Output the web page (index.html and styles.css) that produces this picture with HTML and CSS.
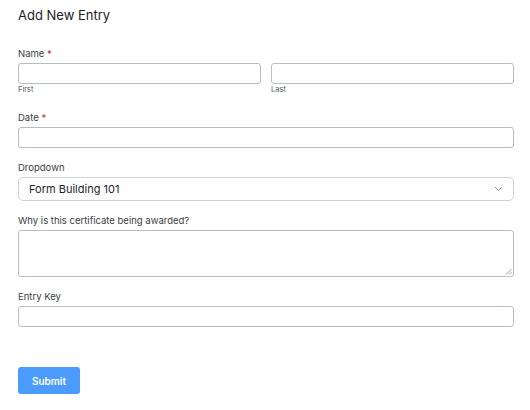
FILE: index.html
```html
<!DOCTYPE html>
<html>
<head>
<meta charset="utf-8">
<link rel="stylesheet" href="styles.css">
</head>
<body>
<div class="form">
  <h1 class="title">Add New Entry</h1>

  <div class="field field-name">
    <div class="label">Name <span class="req">*</span></div>
    <div class="name-row">
      <div class="name-col">
        <div class="input"></div>
        <div class="sublabel">First</div>
      </div>
      <div class="name-col">
        <div class="input"></div>
        <div class="sublabel">Last</div>
      </div>
    </div>
  </div>

  <div class="field">
    <div class="label">Date <span class="req">*</span></div>
    <div class="input"></div>
  </div>

  <div class="field">
    <div class="label">Dropdown</div>
    <div class="select">
      <span>Form Building 101</span>
      <svg class="chev" width="9" height="6" viewBox="0 0 9 6"><path d="M1 1l3.5 3.5L8 1" fill="none" stroke="#8a8f98" stroke-width="1"/></svg>
    </div>
  </div>

  <div class="field">
    <div class="label">Why is this certificate being awarded?</div>
    <div class="textarea">
      <svg class="grip" width="7" height="7" viewBox="0 0 7 7"><path d="M6.5 1L1 6.5M6.5 4L4 6.5" stroke="#888" stroke-width="0.8"/></svg>
    </div>
  </div>

  <div class="field">
    <div class="label">Entry Key</div>
    <div class="input"></div>
  </div>

  <button class="submit">Submit</button>
</div>
</body>
</html>
```

FILE: styles.css
```css
html, body {
  margin: 0;
  padding: 0;
  background: #fff;
}
body {
  font-family: Inter, "Liberation Sans", sans-serif;
  color: #2a2d33;
}
.form {
  padding: 7px 16px 0 18px;
  display: flex;
  flex-direction: column;
}
.title {
  margin: 0 0 25px 0;
  font-size: 13px;
  line-height: 16px;
  font-weight: 400;
  color: #1d2125;
}
.field {
  display: flex;
  flex-direction: column;
  margin-bottom: 14px;
}
.field-name {
  margin-bottom: 17px;
}
.label {
  font-size: 9.5px;
  line-height: 12px;
  margin-bottom: 3px;
  color: #3a3d42;
}
.req {
  color: #c0282d;
}
.name-row {
  display: flex;
  gap: 10px;
}
.name-col {
  flex: 1;
  display: flex;
  flex-direction: column;
}
.sublabel {
  font-size: 7.5px;
  line-height: 10px;
  margin-top: 1px;
  color: #555a60;
}
.input {
  height: 21px;
  box-sizing: border-box;
  border: 1px solid #b9bdc4;
  border-radius: 3px;
  background: #fff;
}
.select {
  height: 24px;
  box-sizing: border-box;
  border: 1px solid #ced2d8;
  border-radius: 5px;
  display: flex;
  align-items: center;
  justify-content: space-between;
  padding: 0 10px 0 10px;
  font-size: 11px;
  color: #23262b;
}
.chev {
  display: block;
}
.textarea {
  height: 47px;
  box-sizing: border-box;
  border: 1px solid #b9bdc4;
  border-radius: 3px;
  display: flex;
  justify-content: flex-end;
  align-items: flex-end;
  padding: 0 1px 1px 0;
}
.grip {
  display: block;
}
.submit {
  margin-top: 26px;
  align-self: flex-start;
  width: 62px;
  height: 27px;
  border: none;
  border-radius: 3px;
  background: #4a9bfb;
  color: #fff;
  font-family: Inter, "Liberation Sans", sans-serif;
  font-size: 10px;
  font-weight: 600;
  padding: 0;
}
```
